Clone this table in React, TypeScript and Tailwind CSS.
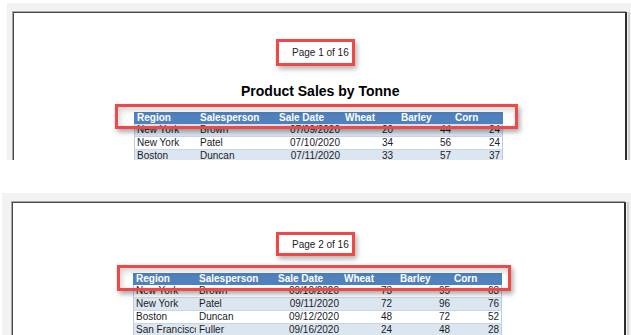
import React from "react";

type Row = string[];

const headers = ["Region", "Salesperson", "Sale Date", "Wheat", "Barley", "Corn"];

const cols = [
  { w: "w-[63px]", cell: "pl-[3px] text-left" },
  { w: "w-[79px]", cell: "pl-[3px] text-left" },
  { w: "w-[66px]", cell: "pr-[2px] text-right" },
  { w: "w-[56px]", cell: "pr-[5px] text-right" },
  { w: "w-[54px]", cell: "pr-[1px] text-right" },
  { w: "w-[51px]", cell: "pr-[3px] text-right" },
];

const firstRows: Row[] = [
  ["New York", "Brown", "07/09/2020", "20", "44", "24"],
  ["New York", "Patel", "07/10/2020", "34", "56", "24"],
  ["Boston", "Duncan", "07/11/2020", "33", "57", "37"],
];

const secondRows: Row[] = [
  ["New York", "Brown", "09/10/2020", "73", "95", "63"],
  ["New York", "Patel", "09/11/2020", "72", "96", "76"],
  ["Boston", "Duncan", "09/12/2020", "48", "72", "52"],
  ["San Francisco", "Fuller", "09/16/2020", "24", "48", "28"],
];

const SalesTable = ({
  rows,
  shadeFirst,
  boxClass,
}: {
  rows: Row[];
  shadeFirst: boolean;
  boxClass: string;
}) => {
  return (
    <div className="relative w-[369px]">
      <div className="flex h-[12px] bg-[#4f81bd] text-white font-bold text-[10px] leading-[12px]">
        {headers.map((h, i) => (
          <div key={h} className={`${cols[i].w} pl-[3px] whitespace-nowrap`}>
            {h}
          </div>
        ))}
      </div>
      {rows.map((r, ri) => {
        const shaded = shadeFirst ? ri % 2 === 0 : ri % 2 === 1;
        return (
          <div
            key={ri}
            className={`flex h-[13px] text-[10px] leading-[12px] text-[#1c1c1c] border-b border-[#c6d6ea] shadow-[inset_1px_0_#b8cce4,inset_-1px_0_#b8cce4] ${
              shaded ? "bg-[#dce6f1]" : "bg-white"
            }`}
          >
            {r.map((c, ci) => (
              <div
                key={ci}
                className={`${cols[ci].w} ${cols[ci].cell} overflow-hidden whitespace-nowrap`}
              >
                {c}
              </div>
            ))}
          </div>
        );
      })}
      <div
        className={`absolute border-[3px] border-[#f04848] shadow-[2px_3px_5px_rgba(0,0,0,0.35),inset_2px_3px_6px_rgba(0,0,0,0.18)] ${boxClass}`}
      />
    </div>
  );
};

const PageLabel = ({ text, h }: { text: string; h: string }) => (
  <div
    className={`flex items-center w-[79px] ${h} pl-[13px] border-[3px] border-[#f04848] bg-white text-[10px] text-[#222] whitespace-nowrap shadow-[2px_3px_5px_rgba(0,0,0,0.3)]`}
  >
    {text}
  </div>
);

const RightEdge = () => (
  <div className="flex h-full">
    <div className="w-[1px] bg-[#f2f2f2]" />
    <div className="w-[2px] bg-[#d2d2d2]" />
    <div className="w-[2px] bg-[#f2f2f2]" />
  </div>
);

const App = () => {
  return (
    <div className="w-[631px] h-[335px] bg-white overflow-hidden font-['Liberation_Sans',Arial,sans-serif]">
      <div className="ml-[7px] mt-[3px] h-[157px] bg-[#f2f2f2] pl-[6px] pt-[9px] flex overflow-hidden">
        <div className="w-[614px] h-[160px] shrink-0 bg-white border-t border-l border-[#474747] border-r-2 border-r-[#2e2e2e] shadow-[-1px_-1px_0_#a8a8a8]">
          <div className="ml-[262px] mt-[26px]">
            <PageLabel text="Page 1 of 16" h="h-[27px]" />
          </div>
          <h2 className="mt-[17px] ml-[227px] text-[14px] leading-[16px] font-bold text-black whitespace-nowrap">
            Product Sales by Tonne
          </h2>
          <div className="ml-[120px] mt-[13px]">
            <SalesTable
              rows={firstRows}
              shadeFirst={true}
              boxClass="-left-[19px] -top-[8px] w-[403px] h-[25px]"
            />
          </div>
        </div>
        <RightEdge />
      </div>

      <div className="ml-[2px] mt-[33px] h-[142px] bg-[#f2f2f2] pl-[10px] pt-[9px] flex overflow-hidden">
        <div className="w-[614px] h-[160px] shrink-0 bg-white border-t border-l border-[#474747] border-r-2 border-r-[#2e2e2e] shadow-[-1px_-1px_0_#a8a8a8]">
          <div className="ml-[263px] mt-[29px]">
            <PageLabel text="Page 2 of 16" h="h-[24px]" />
          </div>
          <div className="ml-[120px] mt-[17px]">
            <SalesTable
              rows={secondRows}
              shadeFirst={false}
              boxClass="-left-[16px] -top-[8px] w-[394px] h-[26px]"
            />
          </div>
        </div>
        <RightEdge />
      </div>
    </div>
  );
};

export default App;
